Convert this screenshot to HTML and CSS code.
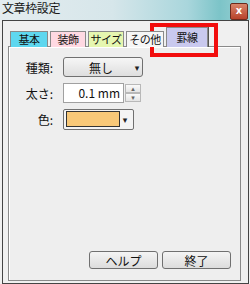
FILE: index.html
```html
<!DOCTYPE html>
<html lang="ja">
<head>
    <meta charset="UTF-8">
    <title>文章枠設定</title>
    <link rel="stylesheet" href="styles.css">
</head>
<body>

    <div class="titlebar">
        <span class="title">文章枠設定</span>
        <span class="close">x</span>
    </div>

    <div class="window">
        <div class="tabs">
            <div class="tab tab-basic">基本</div>
            <div class="tab tab-deco">装飾</div>
            <div class="tab tab-size">サイズ</div>
            <div class="tab tab-other">その他</div>
            <div class="tab tab-line active">罫線</div>
        </div>

        <div class="panel">
            <div class="form">
                <div class="row">
                    <span class="label">種類:</span>
                    <div class="select">
                        <span class="select-text">無し</span>
                        <span class="arrow">▾</span>
                    </div>
                </div>
                <div class="row">
                    <span class="label">太さ:</span>
                    <div class="number">0.1 mm</div>
                    <div class="spin">
                        <span class="spin-btn">▴</span>
                        <span class="spin-btn">▾</span>
                    </div>
                </div>
                <div class="row">
                    <span class="label">色:</span>
                    <div class="color">
                        <span class="swatch"></span>
                        <span class="arrow">▾</span>
                    </div>
                </div>
            </div>

            <div class="buttons">
                <button class="btn">ヘルプ</button>
                <button class="btn">終了</button>
            </div>
        </div>
    </div>

    <div class="highlight"></div>

</body>
</html>
```

FILE: styles.css
```css
body {
    margin: 0;
    width: 250px;
    height: 284px;
    font-family: "Noto Sans CJK JP", "DejaVu Sans", sans-serif;
    font-size: 12px;
    color: #111;
    background: #f0f0f0;
    position: relative;
    overflow: hidden;
}
.titlebar {
    height: 20px;
    display: flex;
    justify-content: space-between;
    align-items: flex-start;
    background: linear-gradient(90deg, #e4ecef 0%, #d6e6ea 45%, #a9d6dc 75%, #7cc4c8 88%, #9fd2d4 100%);
}
.title {
    padding: 0 0 0 2px;
    font-size: 12px;
    line-height: 16px;
    letter-spacing: -0.4px;
    color: #1a1a1a;
}
.close {
    width: 16px;
    height: 15px;
    margin: 3px 2px 0 0;
    background: linear-gradient(#d8856a, #b8422a);
    border: 1px solid #6b2a1c;
    border-radius: 2px;
    color: #fff;
    font-family: "DejaVu Sans", sans-serif;
    font-weight: bold;
    font-size: 10px;
    line-height: 14px;
    text-align: center;
}
.window {
    margin-left: 2px;
    width: 245px;
    height: 262px;
    border: 1px solid #444;
    background: #f0f0f0;
    display: flex;
    flex-direction: column;
}
.tabs {
    height: 26px;
    display: flex;
    align-items: flex-end;
    gap: 2px;
    padding-left: 7px;
    margin-bottom: -1px;
    position: relative;
    z-index: 1;
}
.tab {
    height: 15px;
    border: 1px solid #8a8a8a;
    border-bottom: none;
    line-height: 15px;
    text-align: center;
    font-size: 11px;
    letter-spacing: -0.5px;
    white-space: nowrap;
    overflow: hidden;
}
.tab-basic { width: 36px; background: #5ed7ef; }
.tab-deco { width: 34px; background: #ffd9e2; }
.tab-size { width: 34px; background: #e6f7b0; }
.tab-other { width: 36px; background: #f6f6f6; }
.tab-line {
    width: 40px;
    height: 19px;
    line-height: 19px;
    background: #c9c9ee;
    box-shadow: 1px 0 0 #555;
}
.panel {
    flex: 1;
    margin: 0 7px 2px 5px;
    border: 1px solid #8a8a8a;
    box-shadow: inset 1px 1px 0 #fff;
    background: #eeeeee;
    display: flex;
    flex-direction: column;
}
.form {
    padding-top: 10px;
    display: flex;
    flex-direction: column;
    gap: 6px;
}
.row {
    display: flex;
    align-items: center;
    height: 20px;
}
.label {
    width: 44px;
    text-align: right;
    margin-right: 10px;
}
.select {
    width: 78px;
    height: 18px;
    border: 1px solid #707070;
    border-radius: 3px;
    background: linear-gradient(#f6f6f6, #dedede);
    display: flex;
    align-items: center;
}
.select-text {
    flex: 1;
    text-align: center;
    padding-left: 6px;
}
.arrow {
    width: 10px;
    font-size: 9px;
    text-align: center;
    color: #222;
}
.number {
    width: 56px;
    height: 18px;
    border: 1px solid #a0a0a0;
    background: #fff;
    text-align: right;
    padding-right: 3px;
    line-height: 18px;
}
.spin {
    width: 16px;
    height: 18px;
    margin-left: 1px;
    display: flex;
    flex-direction: column;
}
.spin-btn {
    flex: 1;
    border: 1px solid #b8b8b8;
    background: linear-gradient(#fafafa, #e4e4e4);
    font-size: 7px;
    line-height: 7px;
    text-align: center;
    color: #666;
}
.color {
    width: 67px;
    height: 19px;
    border: 1px solid #707070;
    border-radius: 2px;
    background: #f4f4f4;
    display: flex;
    align-items: center;
    padding-left: 2px;
}
.swatch {
    width: 52px;
    height: 14px;
    border: 1px solid #333;
    background: #f8c878;
}
.buttons {
    margin-top: auto;
    padding: 0 9px 11px 0;
    display: flex;
    justify-content: flex-end;
    gap: 4px;
}
.btn {
    width: 69px;
    height: 18px;
    padding: 0;
    border: 1px solid #707070;
    border-radius: 3px;
    background: linear-gradient(#f4f4f4, #dcdcdc);
    font-family: "Noto Sans CJK JP", sans-serif;
    font-size: 12px;
    line-height: 15px;
    color: #111;
}
.highlight {
    position: absolute;
    left: 150px;
    top: 23px;
    width: 60px;
    height: 26px;
    border: 4px solid #f20d0d;
}
```
